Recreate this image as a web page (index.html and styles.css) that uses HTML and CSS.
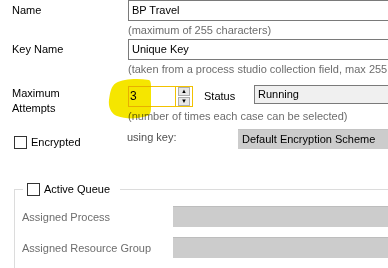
FILE: index.html
```html
<!DOCTYPE html>
<html lang="en">
<head>
<meta charset="UTF-8">
<title>Work Queue Details</title>
<link rel="stylesheet" href="styles.css">
</head>
<body>
<div class="form">
  <div class="field field-name">
    <label class="label">Name</label>
    <div class="control">
      <div class="textbox">BP Travel</div>
      <div class="hint">(maximum of 255 characters)</div>
    </div>
  </div>
  <div class="field">
    <label class="label">Key Name</label>
    <div class="control">
      <div class="textbox">Unique Key</div>
      <div class="hint">(taken from a process studio collection field, max 255 characters)</div>
    </div>
  </div>
  <div class="field field-attempts">
    <label class="label label-tall">Maximum<br>Attempts</label>
    <div class="control">
      <div class="line">
        <div class="spin">
          <!-- marker highlight drawn over the spin box -->
          <svg class="highlight" width="46" height="42" viewBox="0 0 46 42">
            <path d="M9 5 C16 1 30 0 42 2 C44 3 44 6 44 10 L44 30 C44 35 43 38 36 39 C28 41 18 41 10 38 C5 36 1 30 2 22 C3 15 4 8 9 5 Z" fill="#f5e600"/>
          </svg>
          <div class="spin-value">3</div>
          <div class="spin-buttons">
            <span class="spin-btn">&#9650;</span>
            <span class="spin-btn">&#9660;</span>
          </div>
        </div>
        <label class="status-label">Status</label>
        <div class="combo">Running</div>
      </div>
      <div class="hint">(number of times each case can be selected)</div>
    </div>
  </div>
  <div class="encrypt">
    <label class="check"><span class="box"></span>Encrypted</label>
    <span class="using">using key:</span>
    <div class="combo combo-disabled">Default Encryption Scheme</div>
  </div>
  <fieldset class="group">
    <legend class="check"><span class="box"></span>Active Queue</legend>
    <div class="group-row">
      <span class="group-label">Assigned Process</span>
      <div class="disabled-box"></div>
    </div>
    <div class="group-row">
      <span class="group-label">Assigned Resource Group</span>
      <div class="disabled-box"></div>
    </div>
  </fieldset>
</div>
</body>
</html>
```

FILE: styles.css
```css
body {
    margin: 0;
    background: #fff;
    font-family: "Liberation Sans", Arial, sans-serif;
    font-size: 11px;
    color: #000;
    width: 388px;
    height: 268px;
    overflow: hidden;
}
.form {
    width: 420px;
}
.field {
    display: flex;
}
.label {
    width: 128px;
    flex: none;
    box-sizing: border-box;
    padding-left: 12px;
    line-height: 21px;
}
.label-tall {
    line-height: 15px;
    padding-top: 1px;
}
.control {
    flex: 1;
    display: flex;
    flex-direction: column;
}
.textbox {
    height: 21px;
    box-sizing: border-box;
    border: 1px solid #7a7a7a;
    padding-left: 3px;
    line-height: 19px;
}
.hint {
    color: #6d6d6d;
    line-height: 18px;
    height: 18px;
    white-space: nowrap;
}
.field-attempts {
    margin-top: 7px;
}
.line {
    display: flex;
    height: 22px;
}
.spin {
    position: relative;
    margin-top: 1px;
    width: 65px;
    height: 21px;
    box-sizing: border-box;
    border: 1px solid #f2c200;
    display: flex;
}
.highlight {
    position: absolute;
    left: -22px;
    top: -9px;
    mix-blend-mode: multiply;
}
.spin-value {
    position: relative;
    width: 46px;
    border-right: 1px solid #f2c200;
    padding-left: 1px;
    line-height: 19px;
    font-size: 12px;
}
.spin-buttons {
    display: flex;
    flex-direction: column;
    gap: 1px;
    padding: 0 2px 0 2px;
}
.spin-btn {
    width: 12px;
    height: 9px;
    box-sizing: border-box;
    background: #e6e6e6;
    border: 1px solid #adadad;
    font-size: 6px;
    line-height: 7px;
    text-align: center;
    color: #000;
}
.status-label {
    width: 61px;
    box-sizing: border-box;
    padding-left: 11px;
    line-height: 22px;
}
.combo {
    flex: 1;
    height: 19px;
    box-sizing: border-box;
    border: 1px solid #7a7a7a;
    background: #f0f0f0;
    padding-left: 3px;
    line-height: 17px;
}
.encrypt {
    display: flex;
    margin-top: 4px;
    height: 20px;
}
.check {
    display: flex;
    align-items: center;
}
.encrypt .check {
    width: 113px;
    padding-left: 14px;
    padding-top: 6px;
}
.box {
    width: 13px;
    height: 13px;
    box-sizing: border-box;
    border: 1px solid #333;
    background: #fff;
    margin-right: 4px;
}
.using {
    width: 111px;
    color: #505050;
    line-height: 16px;
}
.combo-disabled {
    height: 20px;
    border: none;
    border-top: 1px solid #c4c4c4;
    background: #cccccc;
    color: #000;
    padding-left: 4px;
    line-height: 19px;
}
.group {
    margin: 33px 0 0 14px;
    padding: 0 0 20px 0;
    border: 1px solid #dcdcdc;
    min-width: 0;
}
.group legend {
    margin-left: 8px;
    padding: 0 10px 0 4px;
    height: 14px;
}
.group-row {
    display: flex;
    align-items: center;
    margin-top: 10px;
}
.group-label {
    width: 158px;
    flex: none;
    box-sizing: border-box;
    padding-left: 7px;
    color: #6d6d6d;
}
.disabled-box {
    flex: 1;
    height: 21px;
    box-sizing: border-box;
    background: #cccccc;
    border-top: 1px solid #bdbdbd;
}
```
